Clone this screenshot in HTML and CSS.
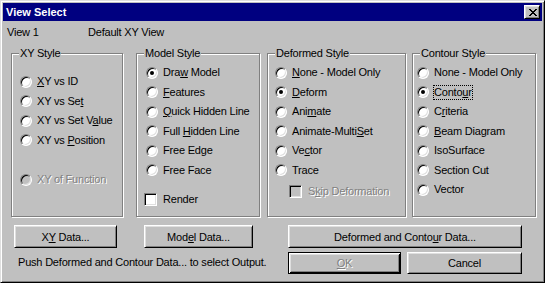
FILE: index.html
```html
<!DOCTYPE html>
<html lang="en">
<head>
    <meta charset="UTF-8">
    <title>View Select</title>
    <link rel="stylesheet" href="styles.css">
</head>
<body>
    <div class="window">
        <div class="titlebar">
            <span class="title">View Select</span>
            <button class="close" title="Close">
                <svg width="8" height="7" viewBox="0 0 8 7" shape-rendering="crispEdges">
                    <rect x="0" y="0" width="2" height="1"/><rect x="6" y="0" width="2" height="1"/>
                    <rect x="1" y="1" width="2" height="1"/><rect x="5" y="1" width="2" height="1"/>
                    <rect x="2" y="2" width="4" height="1"/>
                    <rect x="3" y="3" width="2" height="1"/>
                    <rect x="2" y="4" width="4" height="1"/>
                    <rect x="1" y="5" width="2" height="1"/><rect x="5" y="5" width="2" height="1"/>
                    <rect x="0" y="6" width="2" height="1"/><rect x="6" y="6" width="2" height="1"/>
                </svg>
            </button>
        </div>

        <div class="info">
            <span class="view-name">View 1</span>
            <span>Default XY View</span>
        </div>

        <div class="groups">
            <div class="group group-xy">
                <span class="legend">XY Style</span>
                <div class="opt"><span class="radio"></span><span class="lbl"><u>X</u>Y vs ID</span></div>
                <div class="opt"><span class="radio"></span><span class="lbl">XY vs Se<u>t</u></span></div>
                <div class="opt"><span class="radio"></span><span class="lbl">XY vs Set V<u>a</u>lue</span></div>
                <div class="opt"><span class="radio"></span><span class="lbl">XY vs <u>P</u>osition</span></div>
                <div class="opt opt-gap disabled"><span class="radio"></span><span class="lbl">XY of Function</span></div>
            </div>

            <div class="group group-model">
                <span class="legend">Model Style</span>
                <div class="opt"><span class="radio checked"></span><span class="lbl">Dra<u>w</u> Model</span></div>
                <div class="opt"><span class="radio"></span><span class="lbl"><u>F</u>eatures</span></div>
                <div class="opt"><span class="radio"></span><span class="lbl"><u>Q</u>uick Hidden Line</span></div>
                <div class="opt"><span class="radio"></span><span class="lbl">Full <u>H</u>idden Line</span></div>
                <div class="opt"><span class="radio"></span><span class="lbl">Free Edge</span></div>
                <div class="opt"><span class="radio"></span><span class="lbl">Free Face</span></div>
                <div class="opt opt-render"><span class="check"></span><span class="lbl">Render</span></div>
            </div>

            <div class="group group-deformed">
                <span class="legend">Deformed Style</span>
                <div class="opt"><span class="radio"></span><span class="lbl"><u>N</u>one - Model Only</span></div>
                <div class="opt"><span class="radio checked"></span><span class="lbl"><u>D</u>eform</span></div>
                <div class="opt"><span class="radio"></span><span class="lbl">Ani<u>m</u>ate</span></div>
                <div class="opt"><span class="radio"></span><span class="lbl">Animate-Multi<u>S</u>et</span></div>
                <div class="opt"><span class="radio"></span><span class="lbl">Ve<u>c</u>tor</span></div>
                <div class="opt"><span class="radio"></span><span class="lbl">Trace</span></div>
                <div class="opt opt-skip disabled"><span class="check"></span><span class="lbl">S<u>k</u>ip Deformation</span></div>
            </div>

            <div class="group group-contour">
                <span class="legend">Contour Style</span>
                <div class="opt"><span class="radio"></span><span class="lbl">None - Model Only</span></div>
                <div class="opt"><span class="radio checked"></span><span class="lbl focus">Conto<u>u</u>r</span></div>
                <div class="opt"><span class="radio"></span><span class="lbl">C<u>r</u>iteria</span></div>
                <div class="opt"><span class="radio"></span><span class="lbl"><u>B</u>eam Diagram</span></div>
                <div class="opt"><span class="radio"></span><span class="lbl">IsoSurface</span></div>
                <div class="opt"><span class="radio"></span><span class="lbl">Section Cut</span></div>
                <div class="opt"><span class="radio"></span><span class="lbl">Vector</span></div>
            </div>
        </div>

        <div class="actions">
            <div class="actions-left">
                <div class="btn-row">
                    <button class="btn btn-xy">X<u>Y</u> Data...</button>
                    <button class="btn btn-model">Mod<u>e</u>l Data...</button>
                </div>
                <div class="hint">Push Deformed and Contour Data... to select Output.</div>
            </div>
            <div class="actions-right">
                <button class="btn btn-output">Deformed and Conto<u>u</u>r Data...</button>
                <div class="btn-row btn-row-ok">
                    <button class="btn btn-ok default" disabled><u>O</u>K</button>
                    <button class="btn btn-cancel">Cancel</button>
                </div>
            </div>
        </div>
    </div>
</body>
</html>
```

FILE: styles.css
```css
body {
    margin: 0;
    background: #c0c0c0;
    font-family: "Liberation Sans", Arial, sans-serif;
    font-size: 11px;
    letter-spacing: -0.2px;
    color: #000;
}
u {
    text-decoration-thickness: 1px;
    text-underline-offset: 1px;
}
.window {
    box-sizing: border-box;
    width: 545px;
    height: 283px;
    padding: 2px;
    background: #c0c0c0;
    border: 1px solid;
    border-color: #dfdfdf #000 #000 #dfdfdf;
    box-shadow: inset 1px 1px #fff, inset -1px -1px #808080;
}
.titlebar {
    display: flex;
    align-items: center;
    justify-content: space-between;
    height: 18px;
    padding: 0 2px 0 3px;
    background: #000080;
    color: #fff;
}
.title {
    font-weight: bold;
    font-size: 11px;
    letter-spacing: 0;
}
.close {
    display: flex;
    align-items: center;
    justify-content: center;
    box-sizing: border-box;
    width: 16px;
    height: 14px;
    padding: 0 0 0 1px;
    background: #c0c0c0;
    border: 1px solid;
    border-color: #fff #000 #000 #fff;
    box-shadow: inset 1px 1px #dfdfdf, inset -1px -1px #808080;
}
.info {
    display: flex;
    padding: 5px 0 0 4px;
    line-height: 13px;
}
.view-name {
    width: 81px;
}
.groups {
    display: flex;
    margin-top: 14px;
    padding-left: 8px;
}
.group {
    position: relative;
    box-sizing: border-box;
    height: 164px;
    border: 1px solid #808080;
    box-shadow: 1px 1px 0 #fff, inset 1px 1px 0 #fff;
    padding-top: 9px;
}
.group-xy {
    width: 112px;
    padding-left: 8px;
    padding-top: 18px;
}
.group-model {
    width: 124px;
    margin-left: 13px;
    padding-left: 9px;
}
.group-deformed {
    width: 139px;
    margin-left: 7px;
    padding-left: 7px;
}
.group-contour {
    width: 124px;
    margin-left: 6px;
    padding-left: 4px;
}
.legend {
    position: absolute;
    top: -7px;
    left: 7px;
    padding: 0 1px;
    line-height: 13px;
    background: #c0c0c0;
}
.opt {
    display: flex;
    align-items: center;
    height: 19.5px;
}
.opt-gap {
    margin-top: 20px;
}
.opt-render {
    margin-top: 10px;
    margin-left: -2px;
}
.opt-skip {
    margin-top: 2px;
    padding-left: 14px;
}
.radio {
    position: relative;
    box-sizing: border-box;
    flex: none;
    width: 12px;
    height: 12px;
    margin-right: 4px;
    border-radius: 50%;
    border: 1px solid;
    border-color: #808080 #fff #fff #808080;
    background: #fff;
    box-shadow: inset 1px 1px #000, inset -1px -1px #dfdfdf;
}
.radio.checked::after {
    content: "";
    position: absolute;
    left: 3px;
    top: 3px;
    width: 4px;
    height: 4px;
    border-radius: 50%;
    background: #000;
}
.check {
    box-sizing: border-box;
    flex: none;
    width: 13px;
    height: 13px;
    margin-right: 5px;
    border: 1px solid;
    border-color: #808080 #fff #fff #808080;
    background: #fff;
    box-shadow: inset 1px 1px #000, inset -1px -1px #dfdfdf;
}
.lbl {
    line-height: 13px;
    padding: 1px;
    white-space: nowrap;
}
.lbl.focus {
    outline: 1px dotted #000;
    outline-offset: -1px;
}
.disabled .lbl {
    color: #808080;
    text-shadow: 1px 1px #fff;
}
.disabled .radio,
.disabled .check {
    background: #c0c0c0;
}
.actions {
    display: flex;
    margin-top: 8px;
}
.actions-left {
    width: 285px;
    padding-left: 11px;
    box-sizing: border-box;
}
.btn-row {
    display: flex;
}
.btn {
    box-sizing: border-box;
    height: 23px;
    padding: 0;
    font-family: inherit;
    font-size: 11px;
    letter-spacing: -0.2px;
    color: #000;
    background: #c0c0c0;
    border: 1px solid;
    border-color: #fff #000 #000 #fff;
    box-shadow: inset 1px 1px #dfdfdf, inset -1px -1px #808080;
}
.btn-xy {
    width: 103px;
}
.btn-model {
    width: 109px;
    margin-left: 27px;
}
.hint {
    margin-top: 8px;
    padding-left: 4px;
    line-height: 13px;
}
.btn-output {
    width: 234px;
}
.btn-row-ok {
    margin-top: 4px;
}
.btn-row-ok .btn {
    height: 22px;
}
.btn-ok {
    width: 113px;
}
.btn.default {
    border: 1px solid #000;
    box-shadow: inset 1px 1px #fff, inset -1px -1px #000, inset 2px 2px #dfdfdf, inset -2px -2px #808080;
}
.btn:disabled {
    color: #808080;
    text-shadow: 1px 1px #fff;
}
.btn-cancel {
    width: 115px;
    margin-left: 6px;
}
```
